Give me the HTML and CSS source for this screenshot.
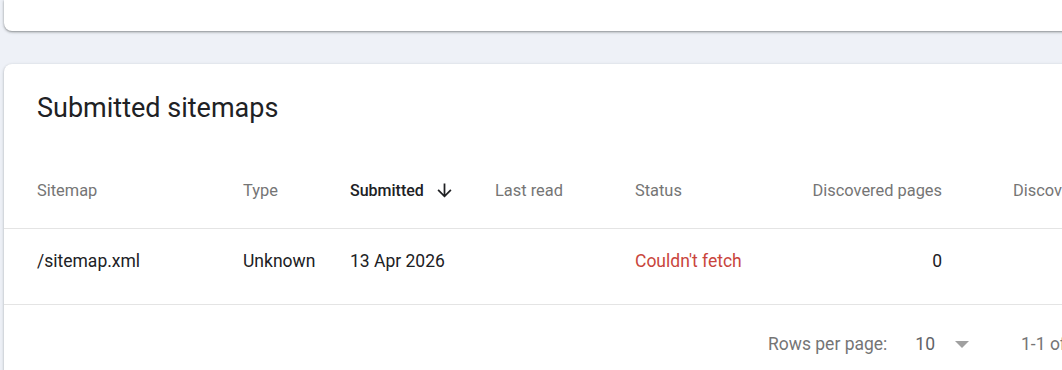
FILE: index.html
```html
<!DOCTYPE html>
<html>
<head>
  <link rel="stylesheet" href="styles.css">
</head>
<body>
  <!-- Card above (scrolled out of view) -->
  <div class="card card-top"></div>

  <!-- Submitted sitemaps card -->
  <div class="card card-sitemaps">
    <h2 class="card-title">Submitted sitemaps</h2>

    <div class="table">
      <div class="row row-head">
        <div class="cell">Sitemap</div>
        <div class="cell">Type</div>
        <div class="cell cell-sorted">Submitted
          <svg class="sort-icon" viewBox="0 0 24 24" width="21" height="21"><path d="M20 12l-1.41-1.41L13 16.17V4h-2v12.17l-5.58-5.59L4 12l8 8 8-8z"/></svg>
        </div>
        <div class="cell">Last read</div>
        <div class="cell">Status</div>
        <div class="cell cell-num">Discovered pages</div>
        <div class="cell cell-last">Discovered videos</div>
      </div>
      <div class="row row-body">
        <div class="cell">/sitemap.xml</div>
        <div class="cell">Unknown</div>
        <div class="cell">13 Apr 2026</div>
        <div class="cell"></div>
        <div class="cell status-error">Couldn't fetch</div>
        <div class="cell cell-num">0</div>
        <div class="cell cell-last"></div>
      </div>
    </div>

    <!-- Pagination -->
    <div class="pager">
      <span class="pager-label">Rows per page:</span>
      <span class="pager-select">10 <span class="caret"></span></span>
      <span class="pager-range">1-1 of 1</span>
    </div>
  </div>
</body>
</html>
```
FILE: styles.css
```css
/* Main Element Styles */
html, body {
  margin: 0;
  overflow: hidden;
}
body {
  font-family: Roboto, "Noto Sans", Arial, sans-serif;
  background-color: #eef1f7;
  width: 1062px;
  height: 370px;
}

/* Card Styles */
.card {
  background-color: #fff;
  margin-left: 4px;
  width: 1120px;
  border-radius: 8px;
  box-shadow: 0 1px 2px rgba(60, 64, 67, 0.3), 0 1px 3px 1px rgba(60, 64, 67, 0.1);
}
.card-top {
  height: 31px;
  margin-bottom: 33px;
  border-radius: 0 0 8px 8px;
  box-shadow: 0 1px 2px rgba(60, 64, 67, 0.45), 0 1px 3px 1px rgba(60, 64, 67, 0.12);
}
.card-sitemaps {
  height: 340px;
}
.card-title {
  margin: 0;
  height: 88px;
  padding-left: 33px;
  font-size: 27px;
  font-weight: 400;
  line-height: 88px;
  color: #202124;
}

/* Table Styles */
.row {
  display: grid;
  grid-template-columns: 206px 107px 145px 140px 140px 167px 200px;
  padding-left: 33px;
  align-items: center;
  border-bottom: 1px solid #e4e4e4;
}
.row-head {
  height: 76px;
  font-size: 16.4px;
  color: #757575;
}
.row-body {
  height: 63px;
  padding-bottom: 12px;
  font-size: 17.5px;
  color: #202124;
}
.cell {
  white-space: nowrap;
}
.cell-sorted {
  color: #202124;
  font-size: 16px;
  font-weight: 500;
  display: flex;
  align-items: center;
}
.sort-icon {
  margin-left: 10px;
  fill: #202124;
}
.cell-num {
  text-align: right;
}
.cell-last {
  padding-left: 71px;
}
.status-error {
  color: #c9453c;
}

/* Pagination Styles */
.pager {
  display: flex;
  align-items: center;
  height: 78px;
  padding-left: 764px;
  font-size: 17.5px;
  color: #757575;
  white-space: nowrap;
}
.pager-select {
  display: flex;
  align-items: center;
  margin-left: 28px;
  color: #5f6368;
}
.caret {
  margin-left: 20px;
  width: 0;
  height: 0;
  border-left: 7.5px solid transparent;
  border-right: 7.5px solid transparent;
  border-top: 7.5px solid #a0a0a0;
}
.pager-range {
  margin-left: 52px;
}
```
